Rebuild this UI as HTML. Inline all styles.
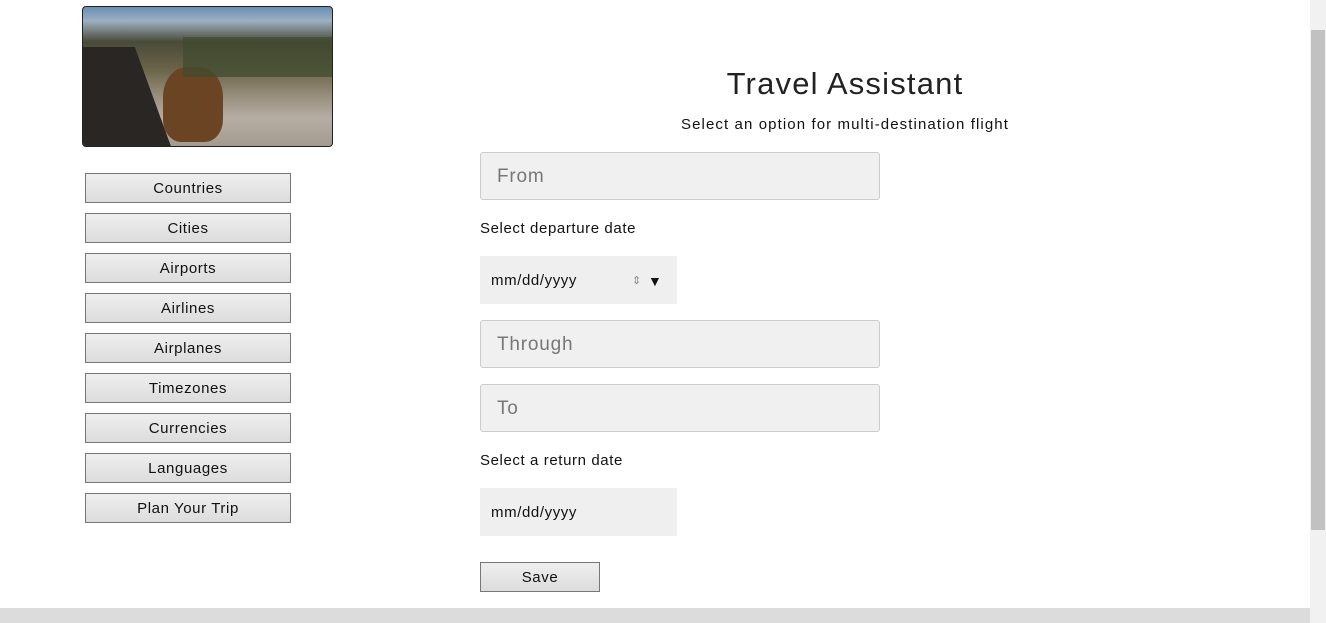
<!DOCTYPE html>
<html><head><style>
body{margin:0;width:1326px;height:623px;overflow:hidden;background:#fff;font-family:"Liberation Sans",sans-serif;color:#111;position:relative}
.a{position:absolute}
.img{left:82px;top:6px;width:249px;height:139px;border:1px solid #222;border-radius:4px;overflow:hidden;
background:linear-gradient(180deg,#6a8fb5 0%,#9db0c0 10%,#4a4a3a 25%,#6a6448 45%,#9a9080 65%,#b6aea4 80%,#a39a90 100%)}
.btn{left:85px;width:204px;height:28px;border:1px solid #777;background:linear-gradient(#efefef,#dcdcdc);font-size:15px;text-align:center;line-height:30px;letter-spacing:.6px}
.inp{left:480px;background:#f0f0f0;border:1px solid #ccc;border-radius:3px;font-size:19px;color:#777;line-height:48px;padding-left:16px;box-sizing:border-box;width:400px;height:48px;letter-spacing:.8px}
.lbl{left:480px;font-size:15px;letter-spacing:.6px}
.date{left:480px;width:197px;height:48px;background:#efefef;font-size:15px;line-height:50px;padding-left:11px;box-sizing:border-box;letter-spacing:.6px}
</style></head><body>
<div class="a img">
<div class="a" style="left:-20px;top:40px;width:90px;height:100px;background:#2a2624;transform:skewX(20deg)"></div>
<div class="a" style="left:80px;top:60px;width:60px;height:75px;border-radius:40% 40% 30% 30%;background:#6b4424"></div>
<div class="a" style="left:100px;top:30px;width:150px;height:40px;background:#3f4a2e;opacity:.7"></div>
</div>
<div class="a btn" style="top:173px">Countries</div>
<div class="a btn" style="top:213px">Cities</div>
<div class="a btn" style="top:253px">Airports</div>
<div class="a btn" style="top:293px">Airlines</div>
<div class="a btn" style="top:333px">Airplanes</div>
<div class="a btn" style="top:373px">Timezones</div>
<div class="a btn" style="top:413px">Currencies</div>
<div class="a btn" style="top:453px">Languages</div>
<div class="a btn" style="top:493px">Plan Your Trip</div>
<div class="a" style="left:670px;width:350px;top:66px;text-align:center;font-size:31px;letter-spacing:1.2px;color:#222">Travel Assistant</div>
<div class="a" style="left:625px;width:440px;top:116px;text-align:center;font-size:15px;letter-spacing:1.1px">Select an option for multi-destination flight</div>
<div class="a inp" style="top:152px">From</div>
<div class="a lbl" style="top:220px">Select departure date</div>
<div class="a date" style="top:256px">mm/dd/yyyy<span class="a" style="left:152px;top:0;font-size:11px;color:#888">⇕</span><span class="a" style="left:168px;top:0;font-size:14px">▼</span></div>
<div class="a inp" style="top:320px">Through</div>
<div class="a inp" style="top:384px">To</div>
<div class="a lbl" style="top:452px">Select a return date</div>
<div class="a date" style="top:488px">mm/dd/yyyy</div>
<div class="a btn" style="left:480px;top:562px;width:118px">Save</div>
<div class="a" style="left:1310px;top:0;width:16px;height:623px;background:#f1f1f1"></div>
<div class="a" style="left:1311px;top:30px;width:14px;height:500px;background:#c1c1c1"></div>
<div class="a" style="left:0;top:608px;width:1310px;height:15px;background:#dcdcdc"></div>
</body></html>
